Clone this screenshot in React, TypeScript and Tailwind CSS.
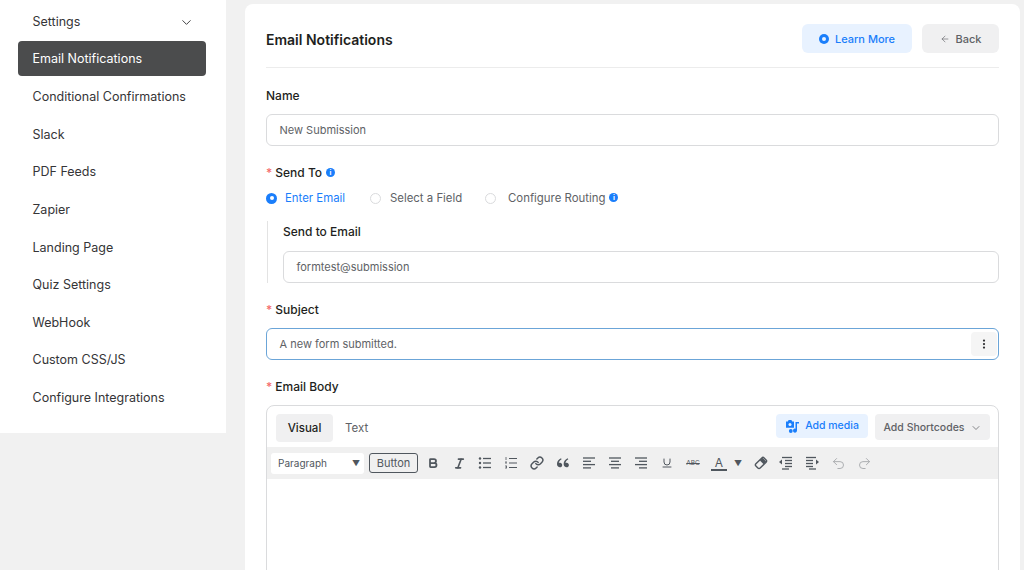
import React from "react"
import { ArrowLeft, Bold, ChevronDown, Italic, Link, MoreVertical, Redo2, Underline, Undo2 } from "lucide-react"
import { RiDoubleQuotesL } from "react-icons/ri"

const menuItems = [
  "Email Notifications",
  "Conditional Confirmations",
  "Slack",
  "PDF Feeds",
  "Zapier",
  "Landing Page",
  "Quiz Settings",
  "WebHook",
  "Custom CSS/JS",
  "Configure Integrations",
]

const Info = () => (
  <span className="flex h-[9px] w-[9px] items-center justify-center rounded-full bg-[#1a7efb] text-[7px] font-bold leading-none text-white">
    i
  </span>
)

const Label = ({ children, required }: { children: React.ReactNode; required?: boolean }) => (
  <div className="flex h-5 items-center pt-[2px] text-[12px] font-medium text-[#1e1f21]">
    {required && <span className="mr-[3px] text-[#f56c6c]">*</span>}
    {children}
  </div>
)

const Input = ({ value }: { value: string }) => (
  <div className="flex h-[32px] items-center rounded-md border border-[#dadbdd] bg-white pl-[12.5px] pt-[1px] text-[11px] text-[#606266]">
    {value}
  </div>
)

const Radio = ({ label, active, gap = "gap-[8px]" }: { label: string; active?: boolean; gap?: string }) => (
  <div className={`flex items-center pt-[1px] text-[11.4px] ${gap} ${active ? "text-[#1a7efb]" : "text-[#606266]"}`}>
    {active ? (
      <span className="flex h-[11px] w-[11px] items-center justify-center rounded-full bg-[#1a7efb]">
        <span className="h-[4px] w-[4px] rounded-full bg-white" />
      </span>
    ) : (
      <span className="h-[11px] w-[11px] rounded-full border border-[#dadbdd]" />
    )}
    {label}
  </div>
)

const ToolIcon = ({ children }: { children: React.ReactNode }) => (
  <span className="flex w-[26px] shrink-0 items-center justify-center text-[#50575e]">{children}</span>
)

// 14px toolbar glyph built from horizontal strokes
const Lines = ({ rows, children }: { rows: [number, number, number][]; children?: React.ReactNode }) => (
  <svg width="14" height="14" viewBox="0 0 14 14" stroke="currentColor" fill="currentColor">
    {rows.map(([x1, x2, y]) => (
      <line key={`${x1}-${y}`} x1={x1} x2={x2} y1={y} y2={y} strokeWidth="1.3" />
    ))}
    {children}
  </svg>
)

const BulletList = () => (
  <Lines rows={[[5, 13, 2.5], [5, 13, 7], [5, 13, 11.5]]}>
    <circle cx="2" cy="2.5" r="1.2" stroke="none" />
    <circle cx="2" cy="7" r="1.2" stroke="none" />
    <circle cx="2" cy="11.5" r="1.2" stroke="none" />
  </Lines>
)

const NumberList = () => (
  <svg width="14" height="14" viewBox="0 0 14 14" stroke="currentColor">
    <path d="M5 2.5h8M5 7h8M5 11.5h8" strokeWidth="1" />
    <path d="M2 1v3M1 6h2M2 6v2M1 10h2M1 12h2M2.5 10v2" strokeWidth="0.8" />
  </svg>
)

const AlignLeftIcon = () => <Lines rows={[[1, 13, 2], [1, 9, 5.3], [1, 13, 8.6], [1, 9, 11.9]]} />
const AlignCenterIcon = () => <Lines rows={[[1, 13, 2], [3, 11, 5.3], [1, 13, 8.6], [3, 11, 11.9]]} />
const AlignRightIcon = () => <Lines rows={[[1, 13, 2], [5, 13, 5.3], [1, 13, 8.6], [5, 13, 11.9]]} />

const OutdentIcon = () => (
  <Lines rows={[[3, 13, 1.5], [6, 13, 4.5], [6, 13, 7.5], [6, 13, 10.5], [3, 10, 13]]}>
    <path d="M0 6l3-2.5v5z" stroke="none" />
  </Lines>
)

const IndentIcon = () => (
  <Lines rows={[[1, 11, 1.5], [1, 8, 4.5], [1, 8, 7.5], [1, 8, 10.5], [4, 11, 13]]}>
    <path d="M14 6l-3-2.5v5z" stroke="none" />
  </Lines>
)

const EraserIcon = () => (
  <svg width="14" height="14" viewBox="0 0 14 14" fill="none" stroke="currentColor" strokeWidth="1.4">
    <rect x="1.2" y="4" width="11.6" height="6" rx="1.6" transform="rotate(-45 7 7)" />
    <path d="M8.6 1.8l3.6 3.6-2.6 2.8-3.7-3.7z" fill="currentColor" stroke="none" />
  </svg>
)

const MediaIcon = () => (
  <svg width="15" height="15" viewBox="0 0 15 15" fill="#1a7efb">
    <path d="M1 2.5h1.8l.8-1.5h2.8l.8 1.5H9v6.3H1z" />
    <circle cx="5" cy="5.6" r="1.5" fill="#e8f2ff" />
    <path d="M10.5 3H14v1.6h-2v7a2 2 0 1 1-1.5-1.9z" />
    <circle cx="5.8" cy="12" r="1.9" />
  </svg>
)

const Toolbar = () => (
  <div className="flex h-[32px] items-center bg-[#f0f0f0] pl-[4px]">
    <div className="flex h-[21px] w-[93px] items-center justify-between rounded-[3px] bg-white pl-[7px] pr-[4px] text-[10px] text-[#50575e]">
      Paragraph
      <span className="text-[8px] text-[#50575e]">▼</span>
    </div>
    <div className="ml-[5px] flex h-[20px] w-[49px] items-center justify-center rounded-[3px] border border-[#50575e] text-[11px] text-[#50575e]">
      Button
    </div>
    <div className="ml-[2px] flex items-center">
      <ToolIcon><Bold size={12} strokeWidth={3.5} /></ToolIcon>
      <ToolIcon><Italic size={13} strokeWidth={3} /></ToolIcon>
      <ToolIcon><BulletList /></ToolIcon>
      <ToolIcon><NumberList /></ToolIcon>
      <ToolIcon><Link size={14} strokeWidth={2.5} /></ToolIcon>
      <ToolIcon><RiDoubleQuotesL size={16} /></ToolIcon>
      <ToolIcon><AlignLeftIcon /></ToolIcon>
      <ToolIcon><AlignCenterIcon /></ToolIcon>
      <ToolIcon><AlignRightIcon /></ToolIcon>
      <ToolIcon><Underline size={12} strokeWidth={2} /></ToolIcon>
      <ToolIcon><span className="text-[6.5px] leading-none line-through">ABC</span></ToolIcon>
      <span className="flex w-[26px] shrink-0 flex-col items-center text-[12px] leading-[13px] text-[#50575e]">
        A
        <span className="h-[2px] w-[16px] bg-[#50575e]" />
      </span>
      <span className="ml-[2px] w-[14px] shrink-0 text-[8px] text-[#50575e]">▼</span>
      <span className="flex w-[25px] shrink-0 items-center justify-center text-[#50575e]"><EraserIcon /></span>
      <ToolIcon><OutdentIcon /></ToolIcon>
      <ToolIcon><IndentIcon /></ToolIcon>
      <ToolIcon><Undo2 size={15} strokeWidth={1.5} className="text-[#a7aaad]" /></ToolIcon>
      <ToolIcon><Redo2 size={15} strokeWidth={1.5} className="text-[#a7aaad]" /></ToolIcon>
    </div>
  </div>
)

export default function App() {
  return (
    <div className="flex h-[570px] w-[1024px] items-start gap-[19px] overflow-hidden bg-[#f1f1f1] font-['Inter',sans-serif]">
      <aside className="h-[433px] w-[226px] shrink-0 bg-white pl-[18px] pr-[20px] pt-[3px]">
        <div className="flex h-[37px] items-center justify-between pl-[14.5px] pr-[12px] pt-[1px] text-[12.5px] text-[#353537]">
          Settings
          <ChevronDown size={15} strokeWidth={1.5} />
        </div>
        <nav className="mt-[1px] flex flex-col">
          {menuItems.map((item, index) => (
            <div
              key={item}
              className={`flex h-[35px] items-center rounded-[4px] pl-[14.5px] pt-[2px] text-[12.5px] ${
                index === 0 ? "mb-[3px] bg-[#4b4c4d] text-white" : "mb-[2.6px] text-[#353537]"
              }`}
            >
              {item}
            </div>
          ))}
        </nav>
      </aside>

      <main className="mt-[4px] h-[600px] w-[775px] shrink-0 rounded-t-lg bg-white pl-[21px] pr-[21px] pt-[20px]">
        <header className="flex h-[44px] items-start justify-between border-b border-[#ececec]">
          <h1 className="mt-[5.5px] text-[14px] font-semibold leading-[20px] text-[#1e1f21]">Email Notifications</h1>
          <div className="flex gap-[10px]">
            <button className="flex h-[29px] w-[110px] items-center justify-center gap-[6px] rounded-md bg-[#e8f2ff] pt-[1px] text-[11px] font-medium text-[#1a7efb]">
              <span className="flex h-[10px] w-[10px] items-center justify-center rounded-full bg-[#1a7efb]">
                <span className="h-[4px] w-[4px] rounded-full bg-[#e8f2ff]" />
              </span>
              Learn More
            </button>
            <button className="flex h-[29px] w-[77px] items-center justify-center gap-[6px] rounded-md bg-[#f0f0f1] pt-[1px] text-[11px] font-medium text-[#606266]">
              <ArrowLeft size={10} strokeWidth={1.5} />
              Back
            </button>
          </div>
        </header>

        <div className="mt-[17px]">
          <Label>Name</Label>
          <div className="mt-[9px]"><Input value="New Submission" /></div>
        </div>

        <div className="mt-[16px]">
          <div className="flex items-center gap-[4px]">
            <Label required>Send To</Label>
            <Info />
          </div>
          <div className="mt-[6px] flex h-[20px] items-center">
            <div className="w-[104px]"><Radio label="Enter Email" active /></div>
            <div className="w-[115px]"><Radio label="Select a Field" gap="gap-[9px]" /></div>
            <div className="flex items-center gap-[4px]">
              <Radio label="Configure Routing" gap="gap-[12px]" />
              <Info />
            </div>
          </div>
          <div className="mt-[13px] ml-[1px] border-l border-[#e3e3e3] pl-[15px]">
            <Label>Send to Email</Label>
            <div className="mt-[10px]"><Input value="formtest@submission" /></div>
          </div>
        </div>

        <div className="mt-[16px]">
          <Label required>Subject</Label>
          <div className="mt-[9px] flex h-[32px] items-center justify-between rounded-md border border-[#6ba5d8] bg-white pl-[12.5px] pr-[1px] text-[11px] text-[#606266]">
            <span className="pt-[1px]">A new form submitted.</span>
            <span className="flex h-[24px] w-[26px] items-center justify-center rounded-sm bg-[#f5f5f5] text-[#303133]">
              <MoreVertical size={12} strokeWidth={2.5} />
            </span>
          </div>
        </div>

        <div className="mt-[16px]">
          <Label required>Email Body</Label>
          <div className="mt-[9px] h-[200px] rounded-t-lg border border-[#dadbdd]">
            <div className="flex h-[41px] items-start justify-between pl-[9px] pr-[8px] pt-[8px]">
              <div className="flex items-center text-[11.5px]">
                <span className="flex h-[28px] w-[57px] items-center justify-center rounded-[4px] bg-[#f0f0f1] pt-[1px] font-medium text-[#1e1f21]">
                  Visual
                </span>
                <span className="ml-[12px] pt-[1px] text-[#606266]">Text</span>
              </div>
              <div className="flex gap-[7px]">
                <button className="flex h-[24px] w-[92px] items-center justify-center gap-[5px] rounded-[4px] bg-[#e8f2ff] text-[10.5px] font-medium text-[#1a7efb]">
                  <MediaIcon />
                  Add media
                </button>
                <button className="flex h-[26px] w-[115px] items-center justify-center gap-[5px] rounded-[4px] bg-[#f0f0f1] pt-[1px] text-[10.5px] font-medium text-[#606266]">
                  Add Shortcodes
                  <ChevronDown size={12} strokeWidth={1.5} />
                </button>
              </div>
            </div>
            <Toolbar />
          </div>
        </div>
      </main>
    </div>
  )
}
